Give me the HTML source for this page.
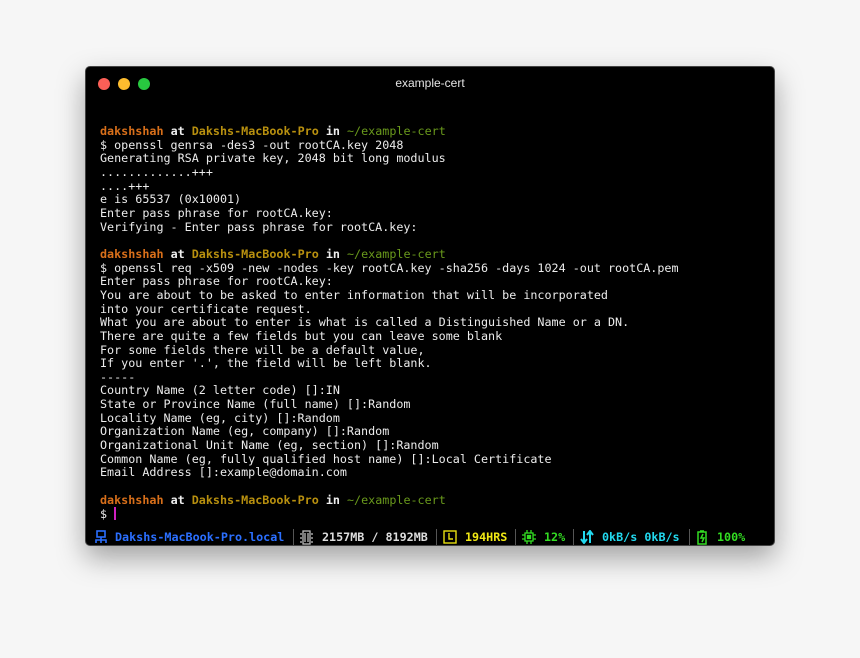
<!DOCTYPE html>
<html><head><style>
html,body{margin:0;padding:0;width:860px;height:658px;background:#f6f6f6;overflow:hidden}
.win{position:absolute;left:85px;top:66px;width:690px;height:480px;background:#000;border-radius:5px;box-shadow:0 12px 28px rgba(0,0,0,.35);border:1px solid #444;box-sizing:border-box}
.dot{position:absolute;top:11px;width:12px;height:12px;border-radius:50%}
.title{position:absolute;top:9px;left:0;width:100%;text-align:center;font:12px "Liberation Sans",sans-serif;color:#e4e4e4}
pre{position:absolute;left:14px;top:58px;margin:0;font:11.73px/13.65px "DejaVu Sans Mono",monospace;color:#ececec}
.u{color:#d86f1a;font-weight:bold}.a{color:#eee;font-weight:bold}.h{color:#b8900f;font-weight:bold}.p{color:#6a9a1c}
.cur{display:inline-block;width:2px;height:13px;background:#d020c0;vertical-align:-2px}
.bar span{position:absolute;top:463px;font:bold 11.73px "DejaVu Sans Mono",monospace;white-space:pre;color:#ddd}
.sep{position:absolute;top:462px;width:1px;height:16px;background:#555}
</style></head><body>
<div class="win">
<div class="dot" style="left:12px;background:#fc5f57"></div>
<div class="dot" style="left:32px;background:#fdbc2e"></div>
<div class="dot" style="left:52px;background:#28c840"></div>
<div class="title">example-cert</div>
<pre><span class="u">dakshshah</span> <span class="a">at</span> <span class="h">Dakshs-MacBook-Pro</span> <span class="a">in</span> <span class="p">~/example-cert</span>
$ openssl genrsa -des3 -out rootCA.key 2048
Generating RSA private key, 2048 bit long modulus
.............+++
....+++
e is 65537 (0x10001)
Enter pass phrase for rootCA.key:
Verifying - Enter pass phrase for rootCA.key:

<span class="u">dakshshah</span> <span class="a">at</span> <span class="h">Dakshs-MacBook-Pro</span> <span class="a">in</span> <span class="p">~/example-cert</span>
$ openssl req -x509 -new -nodes -key rootCA.key -sha256 -days 1024 -out rootCA.pem
Enter pass phrase for rootCA.key:
You are about to be asked to enter information that will be incorporated
into your certificate request.
What you are about to enter is what is called a Distinguished Name or a DN.
There are quite a few fields but you can leave some blank
For some fields there will be a default value,
If you enter '.', the field will be left blank.
-----
Country Name (2 letter code) []:IN
State or Province Name (full name) []:Random
Locality Name (eg, city) []:Random
Organization Name (eg, company) []:Random
Organizational Unit Name (eg, section) []:Random
Common Name (eg, fully qualified host name) []:Local Certificate
Email Address []:example@domain.com

<span class="u">dakshshah</span> <span class="a">at</span> <span class="h">Dakshs-MacBook-Pro</span> <span class="a">in</span> <span class="p">~/example-cert</span>
$ <span class="cur"></span></pre>
<div class="bar">
<svg style="position:absolute;left:8px;top:463px" width="14" height="14" viewBox="0 0 14 14" fill="none" stroke="#2b6fff" stroke-width="1.6"><rect x="3" y="1" width="8" height="6"/><path d="M7 7v3M2 13v-3h10v3M7 10v3"/></svg>
<span style="left:29px;color:#2b6fff">Dakshs-MacBook-Pro.local</span>
<div class="sep" style="left:207px"></div>
<svg style="position:absolute;left:214px;top:463px" width="13" height="15" viewBox="0 0 13 15" fill="none" stroke="#bbb" stroke-width="1.3"><rect x="3" y="1" width="7" height="13"/><path d="M5 3v9M8 3v9M1 3v2M1 7v2M1 11v2M12 3v2M12 7v2M12 11v2"/></svg>
<span style="left:236px;color:#ddd">2157MB / 8192MB</span>
<div class="sep" style="left:350px"></div>
<svg style="position:absolute;left:357px;top:463px" width="14" height="14" viewBox="0 0 14 14" fill="none" stroke="#e8e010" stroke-width="1.4"><rect x="1" y="1" width="12" height="12"/><path d="M6 3v6h4"/></svg>
<span style="left:379px;color:#f0e814">194HRS</span>
<div class="sep" style="left:429px"></div>
<svg style="position:absolute;left:436px;top:463px" width="14" height="14" viewBox="0 0 14 14" fill="none" stroke="#33dd22" stroke-width="1.3"><rect x="3" y="3" width="8" height="8"/><rect x="5.5" y="5.5" width="3" height="3" fill="#33dd22"/><path d="M5 0v3M9 0v3M5 11v3M9 11v3M0 5h3M0 9h3M11 5h3M11 9h3"/></svg>
<span style="left:458px;color:#33dd22">12%</span>
<div class="sep" style="left:487px"></div>
<svg style="position:absolute;left:494px;top:463px" width="14" height="14" viewBox="0 0 14 14" fill="none" stroke="#22d8ee" stroke-width="2"><path d="M4 1v11M1 9l3 4 3-4M10 13V2M7 5l3-4 3 4"/></svg>
<span style="left:516px;color:#22d8ee">0kB/s 0kB/s</span>
<div class="sep" style="left:603px"></div>
<svg style="position:absolute;left:610px;top:463px" width="12" height="15" viewBox="0 0 12 15" fill="none" stroke="#33dd22" stroke-width="1.5"><rect x="2" y="2" width="8" height="12"/><path d="M4 1h4M7 4l-2 4h3l-2 4"/></svg>
<span style="left:631px;color:#33dd22">100%</span>
</div>
</div>
</body></html>
